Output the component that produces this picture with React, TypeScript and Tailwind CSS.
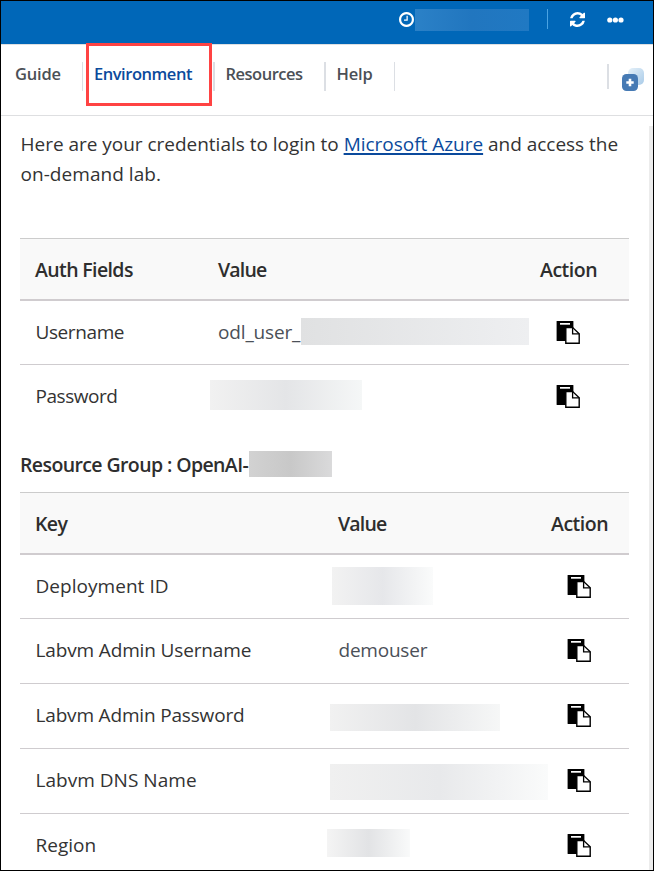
import type { ReactNode } from "react";

function ClockIcon() {
  return (
    <svg className="h-[15px] w-[15px] shrink-0 fill-white" viewBox="128 128 1536 1536">
      <path d="M1024 544v448q0 14-9 23t-23 9h-320q-14 0-23-9t-9-23v-64q0-14 9-23t23-9h224v-352q0-14 9-23t23-9h64q14 0 23 9t9 23zm416 352q0-148-73-273t-198-198-273-73-273 73-198 198-73 273 73 273 198 198 273 73 273-73 198-198 73-273zm224 0q0 209-103 385.5t-279.5 279.5-385.5 103-385.5-103-279.5-279.5-103-385.5 103-385.5 279.5-279.5 385.5-103 385.5 103 279.5 279.5 103 385.5z" />
    </svg>
  );
}

function RefreshIcon() {
  return (
    <svg className="h-[15px] w-[15px] shrink-0 fill-white" viewBox="0 0 1536 1536">
      <path d="M1511 928q0 5-1 7-64 268-268 434.5t-478 166.5q-146 0-282.5-55t-243.5-157l-129 129q-19 19-45 19t-45-19-19-45v-448q0-26 19-45t45-19h448q26 0 45 19t19 45-19 45l-137 137q71 66 161 102t187 36q134 0 250-65t186-179q11-17 53-117 8-23 30-23h192q13 0 22.5 9.5t9.5 22.5zm25-800v448q0 26-19 45t-45 19h-448q-26 0-45-19t-19-45 19-45l138-138q-148-137-349-137-134 0-250 65t-186 179q-11 17-53 117-8 23-30 23h-199q-13 0-22.5-9.5t-9.5-22.5v-7q65-268 270-434.5t480-166.5q146 0 284 55.5t245 156.5l130-129q19-19 45-19t45 19 19 45z" />
    </svg>
  );
}

function PasteIcon() {
  return (
    <svg className="block h-6 w-6" viewBox="0 0 24 24">
      <rect x="0.6" y="0" width="16.8" height="20" rx="0.6" fill="#000" />
      <rect x="4" y="2" width="10" height="1.7" fill="#fff" />
      <path d="M9.8 6.6H16.7L23.2 12.8V22.3H9.8Z" fill="#fff" stroke="#000" strokeWidth="1.4" />
      <path d="M16.6 6.6V12.8H23.2" fill="none" stroke="#000" strokeWidth="1.3" />
    </svg>
  );
}

function StackIcon() {
  return (
    <svg className="mt-[23px] ml-[13px] h-[23px] w-[22px]" viewBox="0 0 22 23">
      <defs>
        <linearGradient id="back" x1="0" y1="0" x2="1" y2="1">
          <stop offset="0" stopColor="#e6f1f9" />
          <stop offset="1" stopColor="#a9cbe8" />
        </linearGradient>
      </defs>
      <rect x="6" y="0" width="16" height="17" rx="5" fill="url(#back)" />
      <rect x="0" y="6" width="16" height="17" rx="4.5" fill="#467ab4" />
      <path d="M8 10.8V18.2M4.3 14.5H11.7" stroke="#fff" strokeWidth="2.6" />
    </svg>
  );
}

function Head({ a, b, c, cols }: { a: string; b: string; c: string; cols: string }) {
  return (
    <div
      className={`grid h-[63px] items-center border-t border-b-2 border-t-[#ccc] border-b-[#d0cccf] bg-[#f9f9f9] pl-[15px] pt-[2px] text-[19.5px] font-semibold tracking-[-0.62px] text-[#2e2e2e] ${cols}`}
    >
      <span>{a}</span>
      <span className="tracking-[-0.8px]">{b}</span>
      <span className="tracking-[-0.5px]">{c}</span>
    </div>
  );
}

type RowProps = { label: string; children?: ReactNode; cols: string; box: string; tracking?: string };

function Row({ label, children, cols, box, tracking = "" }: RowProps) {
  return (
    <div className={`grid items-center pl-[15px] text-[19px] ${cols} ${box}`}>
      <span className={`whitespace-nowrap pb-px pl-[0.5px] ${tracking}`}>{label}</span>
      <div className="flex items-center pb-[2px] text-[#4b5058]">{children}</div>
      <div className="pl-4">
        <PasteIcon />
      </div>
    </div>
  );
}

const authCols = "grid-cols-[183px_322px_1fr]";
const keyCols = "grid-cols-[303px_213px_1fr]";
const line = "border-b border-[#cfcccf]";

export default function App() {
  return (
    <div className="relative flex h-[871px] w-[654px] flex-col overflow-hidden border border-black bg-white font-['Open_Sans','Noto_Sans',sans-serif] text-[#333]">
      <header className="flex h-[43px] shrink-0 items-start bg-[#0067b8] pl-[398px]">
        <div className="mt-[11px]">
          <ClockIcon />
        </div>
        <div className="ml-px mt-2 h-[22px] w-[114px] bg-linear-to-r from-[#2b81c7] via-[#2176bf] to-[#2079c3]" />
        <div className="ml-[18px] mt-2 h-5 w-px bg-[#4aa3e3]" />
        <div className="ml-[21.5px] mt-[11px]">
          <RefreshIcon />
        </div>
        <svg className="ml-[22px] mt-4 h-[6px] w-[17px] fill-white" viewBox="0 0 17 6">
          <circle cx="2.8" cy="3" r="2.6" />
          <circle cx="8.4" cy="3" r="2.6" />
          <circle cx="14" cy="3" r="2.6" />
        </svg>
      </header>

      <nav className="flex h-[72px] shrink-0 items-start border-t border-b border-[#dedfe1] text-[16.5px] font-semibold tracking-[-0.4px] text-[#4b5056]">
        <div className="mt-[17px] flex h-[29px] w-[82px] border-r border-[#dcdfe4] pl-[14px] leading-6 tracking-[-0.2px]">Guide</div>
        <div className="mt-[17px] flex h-[29px] w-[132px] border-r-2 border-[#dcdfe4] pl-[11px] leading-6 tracking-[-0.46px] text-[#0b4a9c]">Environment</div>
        <div className="mt-[17px] flex h-[29px] w-[111px] border-r-2 border-[#dcdfe4] pl-[10.5px] leading-6 tracking-[-0.49px]">Resources</div>
        <div className="mt-[17px] flex h-[29px] w-[69px] border-r border-[#dcdfe4] pl-[10.5px] leading-6 tracking-[-0.2px]">Help</div>
        <div className="ml-[212px] mt-[19px] h-[25px] w-[2px] bg-[#dcdfe4]" />
        <StackIcon />
      </nav>
      <div className="absolute left-[85px] top-[42px] h-[63px] w-[126px] border-3 border-[#ff4343]" />

      <div className="flex min-h-0 flex-1">
        <main className="ml-[19px] w-[609px] shrink-0">
          <p className="mt-[13px] h-[109px] whitespace-nowrap pl-[0.5px] text-[19px] leading-[30px] tracking-[-0.02px]">
            Here are your credentials to login to{" "}
            <a className="text-[#0b4a9c] underline decoration-2 underline-offset-2">Microsoft Azure</a> and access the
            <br />
            <span className="tracking-[0.05px]">on-demand lab.</span>
          </p>

          <Head a="Auth Fields" b="Value" c="Action" cols={authCols} />
          <Row label="Username" cols={authCols} box={`h-[64px] ${line}`} tracking="tracking-[-0.4px]">
            <span className="w-[83px] whitespace-nowrap pt-[2px] tracking-[-0.15px]">odl_user_</span>
            <span className="h-[27px] w-[228px] bg-linear-to-r from-[#e0e1e2] to-[#eeeff1]" />
          </Row>
          <Row label="Password" cols={authCols} box="h-[64px] pb-px" tracking="tracking-[-0.45px]">
            <span className="-ml-2 -mt-[2px] h-[30px] w-[152px] bg-linear-to-r from-[#f1f1f1] via-[#e4e5e7] to-[#f5f7f7]" />
          </Row>

          <div className="mt-[22px] flex h-[41px] items-start">
            <h2 className="w-[229px] whitespace-nowrap text-[19.5px] font-semibold leading-[28px] tracking-[-0.6px] text-[#2e2e2e]">
              Resource Group : OpenAI-
            </h2>
            <span className="h-[26px] w-[83px] bg-linear-to-r from-[#d2d2d2] via-[#c8c8c8] to-[#dadadb]" />
          </div>

          <Head a="Key" b="Value" c="Action" cols={keyCols} />
          <Row label="Deployment ID" cols={keyCols} box={`h-[64px] ${line}`} tracking="tracking-[0.04px]">
            <span className="-ml-[6px] h-[38px] w-[101px] bg-linear-to-r from-[#f2f2f2] via-[#e6e7ea] to-[#fafbfb]" />
          </Row>
          <Row label="Labvm Admin Username" cols={keyCols} box={`h-[65px] ${line}`} tracking="tracking-[-0.14px]">
            <span className="pl-[0.5px] tracking-[-0.22px]">demouser</span>
          </Row>
          <Row label="Labvm Admin Password" cols={keyCols} box={`h-[65px] ${line}`} tracking="tracking-[-0.17px]">
            <span className="-ml-2 mt-[4px] h-[27px] w-[170px] bg-linear-to-r from-[#f1f1f1] via-[#e3e4e6] to-[#f6f7f7]" />
          </Row>
          <Row label="Labvm DNS Name" cols={keyCols} box={`h-[65px] ${line}`} tracking="tracking-[0.03px]">
            <span className="-ml-2 mt-[3px] h-[36px] w-[218px] shrink-0 bg-linear-to-r from-[#f0f0f0] via-[#e8e9eb] to-[#fafbfb]" />
          </Row>
          <Row label="Region" cols={keyCols} box="h-[64px]">
            <span className="-ml-[11px] -mt-[5px] h-[28px] w-[83px] bg-linear-to-r from-[#f4f4f4] via-[#e2e3e5] to-[#f9fafa]" />
          </Row>
        </main>
        <div className="ml-5 mt-[10px] w-1 shrink-0 bg-[#ececec]" />
      </div>
    </div>
  );
}
